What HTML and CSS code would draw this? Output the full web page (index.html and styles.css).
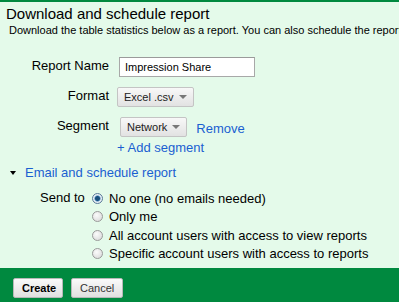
FILE: index.html
```html
<html>

<head>
  <title>Download and schedule report</title>
  <link rel="stylesheet" href="styles.css">
</head>

<body>
  <div class="report-dialog">
    <header class="report-header">
      <h1>Download and schedule report</h1>
      <p>Download the table statistics below as a report. You can also schedule the report to be sent by email.</p>
    </header>

    <main class="report-form">
      <div class="form-row">
        <label class="form-label">Report Name</label>
        <div class="form-field">
          <input type="text" class="text-input" value="Impression Share" />
        </div>
      </div>

      <div class="form-row">
        <label class="form-label">Format</label>
        <div class="form-field">
          <button class="drop-button">Excel .csv <span class="caret"></span></button>
        </div>
      </div>

      <div class="form-row segment-row">
        <label class="form-label">Segment</label>
        <div class="form-field">
          <button class="drop-button">Network <span class="caret"></span></button>
          <a href="#" class="link">Remove</a>
        </div>
      </div>

      <div class="form-row add-row">
        <span></span>
        <a href="#" class="link">+ Add segment</a>
      </div>

      <div class="email-toggle">
        <span class="arrow"></span>
        <a href="#" class="link">Email and schedule report</a>
      </div>

      <div class="send-row">
        <span class="send-label">Send to</span>
        <ul class="radio-list">
          <li><span class="radio checked"></span>No one (no emails needed)</li>
          <li><span class="radio"></span>Only me</li>
          <li><span class="radio"></span>All account users with access to view reports</li>
          <li><span class="radio"></span>Specific account users with access to reports</li>
        </ul>
      </div>
    </main>

    <footer class="report-footer">
      <button class="action-button primary">Create</button>
      <button class="action-button">Cancel</button>
    </footer>
  </div>
</body>

</html>
```

FILE: styles.css
```css
:root {
  --green: #00893f;
  --pale: #e4faea;
  --link: #1a5fd1;
  --text: #000;
}

body {
  margin: 0;
  font-family: "Liberation Sans", Arial, sans-serif;
  color: var(--text);
  background-color: var(--pale);
}

.report-dialog {
  display: flex;
  flex-direction: column;
  height: 302px;
  border-top: 2px solid var(--green);
  box-sizing: border-box;
  overflow: hidden;
}

.report-header {
  padding: 3px 0 0 6px;
}

.report-header h1 {
  margin: 0;
  font-size: 15px;
  font-weight: normal;
  line-height: 18px;
}

.report-header p {
  margin: 0;
  padding-left: 3px;
  font-size: 11px;
  line-height: 14px;
  white-space: nowrap;
}

.report-form {
  flex-grow: 1;
  padding-top: 20px;
  font-size: 13px;
}

.form-row {
  display: grid;
  grid-template-columns: 109px 1fr;
  column-gap: 8px;
  align-items: start;
  margin-bottom: 10px;
}

.form-label {
  text-align: right;
  line-height: 16px;
  padding-top: 1px;
}

.form-field {
  display: flex;
  align-items: center;
}

.text-input {
  margin-left: 2px;
  width: 136px;
  height: 20px;
  box-sizing: border-box;
  border: 1px solid #a8a8a8;
  border-top-color: #9a9a9a;
  padding: 0 5px;
  font-family: "Liberation Sans", Arial, sans-serif;
  font-size: 11px;
  background: #fff;
}

.drop-button {
  display: flex;
  align-items: center;
  height: 20px;
  padding: 0 6px;
  border: 1px solid #c4c4c4;
  border-radius: 2px;
  background: linear-gradient(#f8f8f8, #e2e2e2);
  font-family: "Liberation Sans", Arial, sans-serif;
  font-size: 11px;
  color: #222;
}

.caret {
  margin-left: 5px;
  border-left: 4px solid transparent;
  border-right: 4px solid transparent;
  border-top: 4px solid #777;
}

.segment-row {
  margin-bottom: 2px;
}

.segment-row .drop-button {
  margin-left: 3px;
}

.segment-row .link {
  margin-left: 9px;
  padding-top: 3px;
}

.link {
  color: var(--link);
  text-decoration: none;
}

.add-row {
  margin-bottom: 10px;
  padding-top: 1px;
}

.email-toggle {
  display: flex;
  align-items: center;
  padding-left: 10px;
  line-height: 16px;
}

.arrow {
  width: 0;
  height: 0;
  margin-right: 9px;
  border-left: 3.5px solid transparent;
  border-right: 3.5px solid transparent;
  border-top: 4px solid #000;
}

.send-row {
  display: flex;
  padding: 8px 0 0 40px;
}

.send-label {
  width: 52px;
  line-height: 16px;
  padding-top: 1px;
}

.radio-list {
  list-style: none;
  margin: 0;
  padding: 0;
}

.radio-list li {
  display: flex;
  align-items: center;
  height: 18.5px;
}

.radio {
  width: 9px;
  height: 9px;
  margin-right: 6px;
  border: 1px solid #9a9a9a;
  border-radius: 50%;
  background: radial-gradient(circle at 40% 35%, #fbfbfb, #d6d6d6);
}

.radio.checked {
  background: radial-gradient(circle, #1a4e7a 0 2px, #3a7fb8 2.5px, #e8eef4 3.5px);
  border-color: #5a7a99;
}

.report-footer {
  display: flex;
  gap: 8px;
  height: 34px;
  padding: 10px 0 0 13px;
  box-sizing: border-box;
  background-color: var(--green);
}

.action-button {
  height: 20px;
  padding: 0 8px;
  border: 1px solid #b8b8b8;
  border-radius: 2px;
  background: linear-gradient(#fafafa, #e0e0e0);
  font-family: "Liberation Sans", Arial, sans-serif;
  font-size: 11px;
  color: #333;
}

.action-button.primary {
  font-weight: bold;
  color: #000;
  width: 50px;
}
```
